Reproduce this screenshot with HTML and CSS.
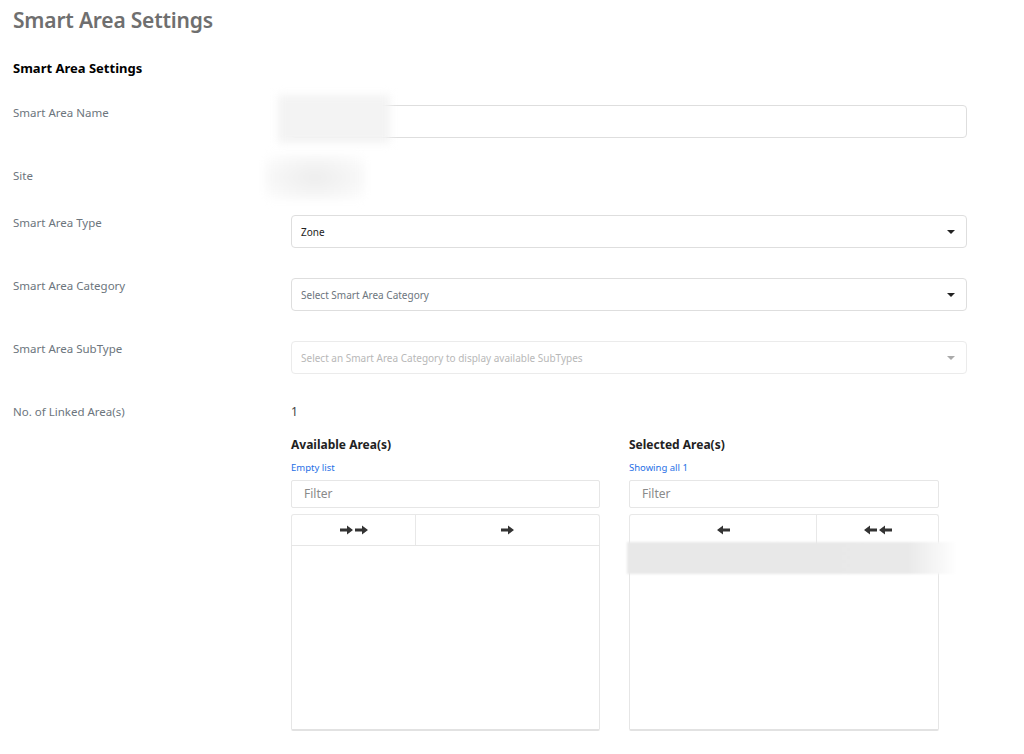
FILE: index.html
```html
<!DOCTYPE html>
<html lang="en">
<head>
	<meta charset="UTF-8">
	<title>Smart Area Settings</title>
	<link rel="stylesheet" href="styles.css">
</head>
<body>
	<div class='page'>
		<h1 class='title'>Smart Area Settings</h1>
		<h2 class='section'>Smart Area Settings</h2>

		<div class='row'>
			<label class='label'>Smart Area Name</label>
			<div class='value'>
				<div class='input'></div>
				<div class='blur blur-name'></div>
			</div>
		</div>

		<div class='row row-text'>
			<label class='label'>Site</label>
			<div class='value'>
				<div class='blur blur-site'></div>
			</div>
		</div>

		<div class='row'>
			<label class='label'>Smart Area Type</label>
			<div class='value'>
				<div class='input select'><span>Zone</span><i class='caret'></i></div>
			</div>
		</div>

		<div class='row'>
			<label class='label'>Smart Area Category</label>
			<div class='value'>
				<div class='input select placeholder'><span>Select Smart Area Category</span><i class='caret'></i></div>
			</div>
		</div>

		<div class='row'>
			<label class='label'>Smart Area SubType</label>
			<div class='value'>
				<div class='input select disabled'><span>Select an Smart Area Category to display available SubTypes</span><i class='caret'></i></div>
			</div>
		</div>

		<div class='row row-text'>
			<label class='label'>No. of Linked Area(s)</label>
			<div class='value'>
				<div class='count'>1</div>
				<div class='dual'>
					<div class='box'>
						<h3>Available Area(s)</h3>
						<div class='info'>Empty list</div>
						<div class='filter'>Filter</div>
						<div class='btns'>
							<div class='btn btn-short'>
								<svg width="13" height="10" viewBox="0 0 13 10"><path d="M0 3.6h7V0.5L13 5 7 9.5V6.4H0z" fill="#333"/></svg><svg width="13" height="10" viewBox="0 0 13 10"><path d="M0 3.6h7V0.5L13 5 7 9.5V6.4H0z" fill="#333"/></svg>
							</div>
							<div class='btn btn-long'>
								<svg width="13" height="10" viewBox="0 0 13 10"><path d="M0 3.6h7V0.5L13 5 7 9.5V6.4H0z" fill="#333"/></svg>
							</div>
						</div>
						<div class='listbox'></div>
					</div>
					<div class='box'>
						<h3>Selected Area(s)</h3>
						<div class='info'>Showing all 1</div>
						<div class='filter'>Filter</div>
						<div class='btns'>
							<div class='btn btn-long'>
								<svg width="13" height="10" viewBox="0 0 13 10"><path d="M13 3.6H6V0.5L0 5 6 9.5V6.4H13z" fill="#333"/></svg>
							</div>
							<div class='btn btn-short'>
								<svg width="13" height="10" viewBox="0 0 13 10"><path d="M13 3.6H6V0.5L0 5 6 9.5V6.4H13z" fill="#333"/></svg><svg width="13" height="10" viewBox="0 0 13 10"><path d="M13 3.6H6V0.5L0 5 6 9.5V6.4H13z" fill="#333"/></svg>
							</div>
						</div>
						<div class='listbox'>
							<div class='blur blur-item'></div>
						</div>
					</div>
				</div>
			</div>
		</div>
	</div>
</body>
</html>
```

FILE: styles.css
```css
*{
	padding: 0;
	margin: 0;
	box-sizing: border-box;
}
body{
	font-family: "Noto Sans", "Open Sans", sans-serif;
	background: #fff;
	color: #333;
}
.page{
	padding: 6px 13px 0;
}
.title{
	font-size: 21px;
	line-height: 28px;
	font-weight: 600;
	color: #6f6f6f;
	letter-spacing: -0.2px;
}
.section{
	margin-top: 25px;
	font-size: 13px;
	line-height: 18px;
	font-weight: 700;
	color: #000;
}
.row{
	display: grid;
	grid-template-columns: 278px 676px;
	margin-top: 30px;
}
.section + .row{
	margin-top: 28px;
}
.row-text .value{
	min-height: 17px;
}
.label{
	font-size: 11.5px;
	line-height: 16px;
	color: #6c757d;
}
.value{
	position: relative;
}
.input{
	display: flex;
	align-items: center;
	height: 33px;
	padding: 0 9px;
	border: 1px solid #dedede;
	border-radius: 4px;
	font-size: 10px;
	color: #222;
}
.select span{
	flex: 1;
}
.placeholder{
	color: #6c757d;
}
.disabled{
	border-color: #ebebeb;
	color: #b8b8b8;
}
.caret{
	width: 0;
	height: 0;
	margin-right: 2px;
	border-left: 4px solid transparent;
	border-right: 4px solid transparent;
	border-top: 4px solid #222;
}
.disabled .caret{
	border-top-color: #aaa;
}
.blur{
	position: absolute;
	filter: blur(4px);
}
.blur-name{
	left: -13px;
	top: -10px;
	width: 112px;
	height: 48px;
	background: #f3f3f3;
}
.blur-site{
	left: -26px;
	top: -13px;
	width: 100px;
	height: 45px;
	background: radial-gradient(ellipse at center, #ededed 0%, #f6f6f6 55%, #fff 100%);
}
.count{
	font-size: 12px;
	line-height: 16px;
	color: #444;
}
.dual{
	display: flex;
	gap: 29px;
	margin-top: 17px;
}
.box{
	width: 310px;
}
.box:first-child{
	width: 309px;
}
.box h3{
	font-size: 12px;
	line-height: 16px;
	font-weight: 700;
	color: #222;
}
.info{
	margin-top: 9px;
	font-size: 9.5px;
	line-height: 12px;
	color: #1f6fe6;
}
.filter{
	margin-top: 6px;
	height: 28px;
	padding-left: 12px;
	border: 1px solid #e6e6e6;
	border-radius: 2px;
	font-size: 12px;
	line-height: 26px;
	color: #8a8a8a;
}
.btns{
	display: flex;
	margin-top: 6px;
	height: 31px;
	border: 1px solid #e8e8e8;
	border-bottom: none;
	border-radius: 3px 3px 0 0;
}
.btn{
	display: flex;
	align-items: center;
	justify-content: center;
	gap: 2px;
}
.btn + .btn{
	border-left: 1px solid #e8e8e8;
}
.btn-short{
	width: 123px;
}
.btn-long{
	flex: 1;
}
.box:last-child .btn-long{
	flex: none;
	width: 186px;
}
.box:last-child .btn-short{
	flex: 1;
}
.listbox{
	position: relative;
	height: 186px;
	border: 1px solid #e6e6e6;
	border-bottom: 2px solid #e2e2e2;
	border-radius: 0 0 2px 2px;
}
.blur-item{
	left: -3px;
	top: -4px;
	width: 330px;
	height: 32px;
	filter: blur(1px);
	background: linear-gradient(to right, #e8e8e8 0%, #e9e9e9 85%, #fff 100%);
}
```
